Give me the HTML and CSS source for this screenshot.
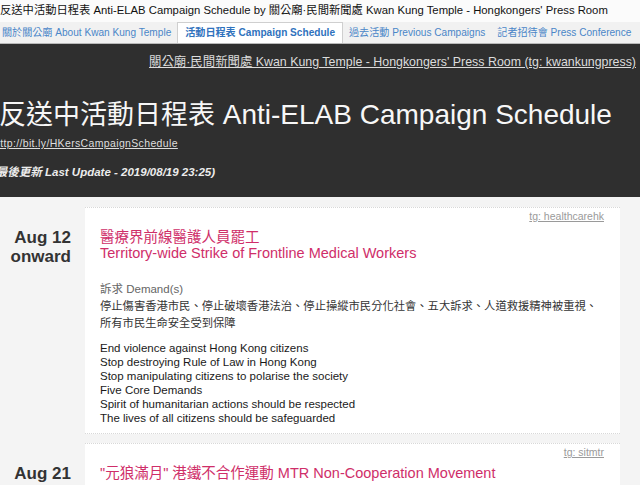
FILE: index.html
```html
<!DOCTYPE html>
<html lang="zh-Hant">
<head>
    <meta charset="UTF-8">
    <meta name="viewport" content="width=device-width, initial-scale=1.0">
    <title>反送中活動日程表 Anti-ELAB Campaign Schedule</title>
    <link rel="stylesheet" href="styles.css">
</head>
<body>

<div class="page">
    <!-- Document title line -->
    <div class="doc-title">反送中活動日程表 Anti-ELAB Campaign Schedule by 關公廟·民間新聞處 Kwan Kung Temple - Hongkongers' Press Room</div>

    <!-- Tabs -->
    <nav class="tabs">
        <a href="#">關於關公廟 About Kwan Kung Temple</a>
        <a href="#" class="active">活動日程表 Campaign Schedule</a>
        <a href="#">過去活動 Previous Campaigns</a>
        <a href="#">記者招待會 Press Conference</a>
    </nav>

    <!-- Header -->
    <header class="hero">
        <div class="hero-top">
            <a href="#">關公廟·民間新聞處 Kwan Kung Temple - Hongkongers' Press Room (tg: kwankungpress)</a>
        </div>
        <h1><span class="zh-title">反送中活動日程表</span> Anti-ELAB Campaign Schedule</h1>
        <a class="short-link" href="#">http://bit.ly/HKersCampaignSchedule</a>
        <p class="updated">(最後更新 Last Update - 2019/08/19 23:25)</p>
    </header>

    <!-- Schedule list -->
    <main class="schedule">
        <div class="event">
            <div class="date">Aug 12<br>onward</div>
            <div class="card">
                <div class="tg"><a href="#">tg: healthcarehk</a></div>
                <h2>醫療界前線醫護人員罷工<br>Territory-wide Strike of Frontline Medical Workers</h2>
                <p class="label">訴求 Demand(s)</p>
                <p class="zh">停止傷害香港市民、停止破壞香港法治、停止操縱市民分化社會、五大訴求、人道救援精神被重視、<br>所有市民生命安全受到保障</p>
                <p class="en">End violence against Hong Kong citizens<br>
                    Stop destroying Rule of Law in Hong Kong<br>
                    Stop manipulating citizens to polarise the society<br>
                    Five Core Demands<br>
                    Spirit of humanitarian actions should be respected<br>
                    The lives of all citizens should be safeguarded</p>
            </div>
        </div>

        <div class="event">
            <div class="date">Aug 21</div>
            <div class="card">
                <div class="tg"><a href="#">tg: sitmtr</a></div>
                <h2>"元狼滿月" 港鐵不合作運動 MTR Non-Cooperation Movement</h2>
                <p class="label">訴求 Demand(s)</p>
            </div>
        </div>
    </main>
</div>

</body>
</html>
```

FILE: styles.css
```css
body {
    margin: 0;
    overflow: hidden;
    background-color: #f4f4f4;
    font-family: "Liberation Sans", Arial, "Noto Sans CJK TC", sans-serif;
    color: #222;
}
a {
    color: inherit;
}
.page {
    margin-left: -8px;
}

/* title line + tabs */
.doc-title {
    height: 22px;
    line-height: 20px;
    padding-left: 8px;
    font-size: 11.3px;
    color: #111;
    background: #fbfbfb;
    white-space: nowrap;
    overflow: hidden;
}
.tabs {
    display: flex;
    height: 21px;
    padding-left: 4px;
    background: #f1f1f1;
    border-bottom: 1px solid #b9b9b9;
    white-space: nowrap;
    overflow: hidden;
}
.tabs a {
    padding: 0 6px;
    line-height: 21px;
    font-size: 10.1px;
    color: #4a86c8;
    text-decoration: none;
}
.tabs a.active {
    padding: 0 7px;
    height: 22px;
    background: #fff;
    border: 1px solid #cfcfcf;
    border-bottom: none;
    box-sizing: border-box;
    line-height: 20px;
    font-weight: bold;
    color: #2f72bd;
}

/* dark header */
.hero {
    background-color: #2f2f2f;
    color: #f2f2f2;
    padding: 10px 4px 18px 0;
    overflow: hidden;
}
.hero-top {
    text-align: right;
    font-size: 12.4px;
    line-height: 16px;
    white-space: nowrap;
}
.hero-top a {
    color: #dcdcdc;
}
.hero h1 {
    margin: 29px 0 0;
    padding-left: 7px;
    font-size: 28px;
    line-height: 32px;
    font-weight: normal;
    white-space: nowrap;
    color: #f7f7f7;
}
.zh-title {
    font-size: 27px;
}
.short-link {
    display: block;
    margin-top: 5px;
    padding-left: 2px;
    font-size: 10.5px;
    letter-spacing: 0.35px;
    line-height: 14px;
    color: #dedede;
}
.updated {
    margin: 15px 0 0;
    font-size: 11.5px;
    line-height: 14px;
    font-weight: bold;
    font-style: italic;
    color: #ececec;
}

/* events */
.schedule {
    padding-top: 10px;
}
.event {
    display: flex;
    margin-bottom: 9px;
}
.date {
    width: 93px;
    flex-shrink: 0;
    box-sizing: border-box;
    padding: 21px 14px 0 0;
    text-align: right;
    font-size: 17px;
    line-height: 19px;
    font-weight: bold;
    color: #333;
}
.card {
    flex: 1;
    margin-right: 20px;
    padding: 1px 16px 8px 15px;
    background: #fff;
    border-top: 1px dotted #d8d8d8;
    border-bottom: 1px dotted #d8d8d8;
}
.tg {
    text-align: right;
    font-size: 10.5px;
    line-height: 14px;
}
.tg a {
    color: #9a9a9a;
}
.card h2 {
    margin: 6px 0 0;
    font-size: 14.5px;
    line-height: 16px;
    font-weight: normal;
    color: #cf2e69;
}
.label {
    margin: 20px 0 0;
    font-size: 11.5px;
    line-height: 16px;
    color: #666;
}
.zh {
    margin: 1px 0 0;
    font-size: 11.3px;
    line-height: 17px;
    color: #333;
    white-space: nowrap;
}
.en {
    margin: 9px 0 0;
    font-size: 11.5px;
    line-height: 14px;
    color: #1a1a1a;
}
```
